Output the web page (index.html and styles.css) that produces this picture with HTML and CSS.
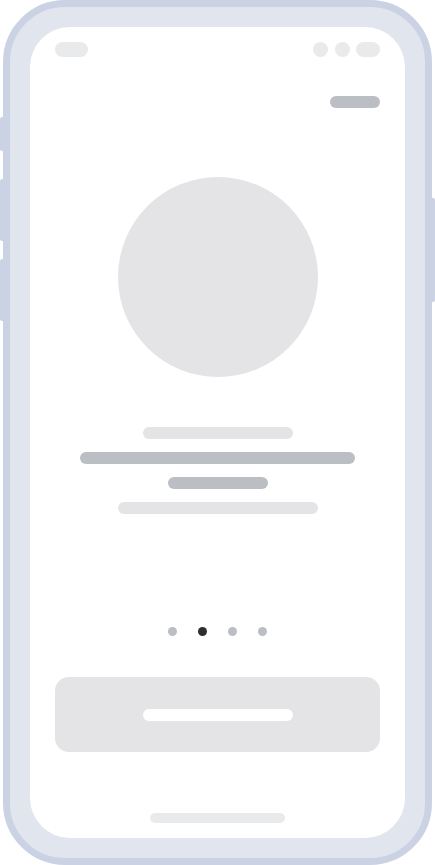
FILE: index.html
```html
<!DOCTYPE html>
<html lang="en">
<head>
<meta charset="utf-8">
<title>Onboarding</title>
<link rel="stylesheet" href="styles.css">
</head>
<body>
<div class="phone">
  <span class="side-btn btn-a"></span>
  <span class="side-btn btn-b"></span>
  <span class="side-btn btn-c"></span>
  <span class="side-btn btn-power"></span>
  <div class="screen">
    <div class="status">
      <span class="pill time"></span>
      <div class="status-icons">
        <span class="dot-icon"></span>
        <span class="dot-icon"></span>
        <span class="pill battery"></span>
      </div>
    </div>
    <div class="skip-row"><span class="skip"></span></div>
    <div class="hero"></div>
    <div class="lines">
      <span class="line l1"></span>
      <span class="line l2"></span>
      <span class="line l3"></span>
      <span class="line l4"></span>
    </div>
    <div class="pager">
      <span class="pdot"></span>
      <span class="pdot active"></span>
      <span class="pdot"></span>
      <span class="pdot"></span>
    </div>
    <div class="cta"><span class="cta-label"></span></div>
    <div class="home"></div>
  </div>
</div>
</body>
</html>
```
FILE: styles.css
```css
html, body {
  margin: 0;
  padding: 0;
  background: #ffffff;
  font-family: "Liberation Sans", Arial, sans-serif;
}
body {
  width: 435px;
  height: 865px;
  overflow: hidden;
}
.phone {
  position: relative;
  box-sizing: border-box;
  margin-left: 3px;
  width: 429px;
  height: 865px;
  border: 7px solid #cbd2e3;
  border-radius: 62px;
  background: #e1e5ee;
  padding: 20px;
}
.side-btn {
  position: absolute;
  width: 4px;
  background: #cbd2e3;
}
.btn-a { left: -10px; top: 110px; height: 34px; border-radius: 2px 0 0 2px; }
.btn-b { left: -10px; top: 172px; height: 62px; border-radius: 2px 0 0 2px; }
.btn-c { left: -10px; top: 252px; height: 62px; border-radius: 2px 0 0 2px; }
.btn-power { right: -10px; top: 191px; height: 104px; border-radius: 0 2px 2px 0; }
.screen {
  box-sizing: border-box;
  width: 375px;
  height: 811px;
  background: #ffffff;
  border-radius: 40px;
  padding: 15px 25px 0;
  display: flex;
  flex-direction: column;
  align-items: center;
}
.status {
  width: 100%;
  height: 15px;
  display: flex;
  justify-content: space-between;
  align-items: center;
}
.pill {
  display: block;
  height: 15px;
  border-radius: 8px;
  background: #e9eaec;
}
.time { width: 33px; }
.status-icons {
  display: flex;
  gap: 6px;
  align-items: center;
}
.dot-icon {
  display: block;
  width: 15px;
  height: 15px;
  border-radius: 50%;
  background: #e9eaec;
}
.dot-icon:first-child { margin-right: 1px; }
.battery { width: 24px; }
.skip-row {
  width: 100%;
  margin-top: 39px;
  display: flex;
  justify-content: flex-end;
}
.skip {
  display: block;
  width: 50px;
  height: 12px;
  border-radius: 6px;
  background: #bbbec2;
}
.hero {
  margin-top: 69px;
  width: 200px;
  height: 200px;
  border-radius: 50%;
  background: #e4e4e7;
}
.lines {
  margin-top: 50px;
  display: flex;
  flex-direction: column;
  align-items: center;
  gap: 13px;
}
.line {
  display: block;
  height: 12px;
  border-radius: 6px;
}
.l1 { width: 150px; background: #e4e4e7; }
.l2 { width: 275px; background: #bbbec2; }
.l3 { width: 100px; background: #bbbec2; }
.l4 { width: 200px; background: #e4e4e7; }
.pager {
  margin-top: 113px;
  display: flex;
  gap: 21.33px;
}
.pdot {
  display: block;
  width: 9px;
  height: 9px;
  border-radius: 50%;
  background: #bbbec2;
}
.pdot.active { background: #2e2e30; }
.cta {
  margin-top: 41px;
  width: 325px;
  height: 75px;
  border-radius: 14px;
  background: #e4e4e7;
  display: flex;
  align-items: center;
  justify-content: center;
}
.cta-label {
  display: block;
  width: 150px;
  height: 12px;
  border-radius: 6px;
  background: #ffffff;
}
.home {
  margin-top: 61px;
  width: 135px;
  height: 10px;
  border-radius: 5px;
  background: #e9eaec;
}
```
